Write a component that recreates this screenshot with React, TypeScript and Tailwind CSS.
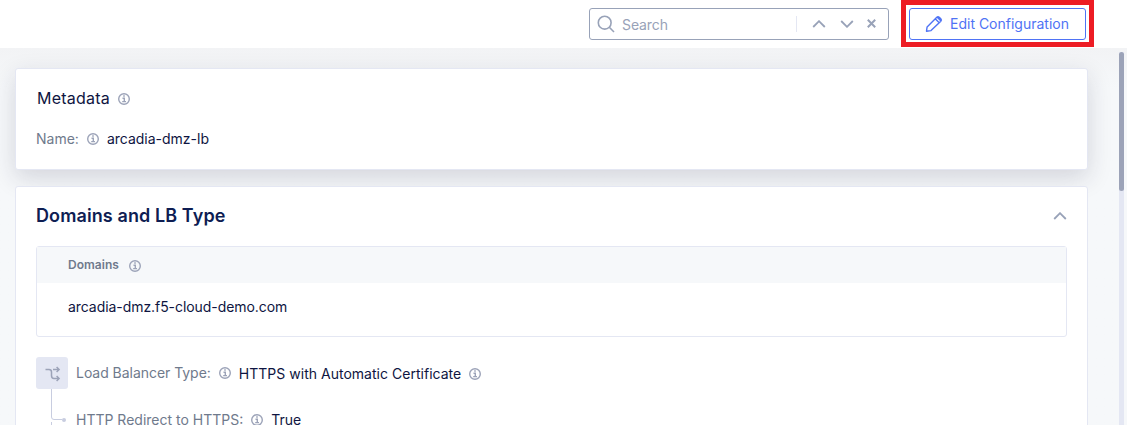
import React from "react";

function Info({ className = "" }: { className?: string }) {
  return (
    <svg viewBox="0 0 12 12" className={`h-3 w-3 shrink-0 ${className}`} fill="none" stroke="#9ca3b8">
      <circle cx="6" cy="6" r="5.3" strokeWidth="1.4" />
      <path d="M4.5 5.3H6.3V8.6M4.2 8.6H8" strokeWidth="1.4" />
      <path d="M5.2 3.1H6.8" strokeWidth="1.5" />
    </svg>
  );
}

function Chevron({ down = false }: { down?: boolean }) {
  return (
    <svg viewBox="0 0 14 8" className="h-2 w-3.5 shrink-0" fill="none" stroke="#98a2b8" strokeWidth="1.8">
      <path d={down ? "M1.2 1L7 6.8L12.8 1" : "M1.2 7L7 1.2L12.8 7"} />
    </svg>
  );
}

function Toolbar() {
  return (
    <header className="flex h-12 shrink-0 justify-end bg-white pr-[33px]">
      <div className="mt-2 mr-3 flex h-8 w-[300px] items-center rounded-[3px] border border-[#98a2b8] pl-[7px]">
        <svg viewBox="0 0 18 18" className="h-[18px] w-[18px]" fill="none" stroke="#98a2b8" strokeWidth="1.6">
          <circle cx="7.7" cy="7.7" r="6.4" />
          <path d="M12.3 12.3L17 17" />
        </svg>
        <span className="mt-0.5 ml-[7px] w-[174px] text-sm leading-5 tracking-[-0.1px] text-[#98a2b8]">Search</span>
        <span className="h-4 w-px bg-[#e4e7f3]" />
        <div className="flex items-center pl-[15px]">
          <Chevron />
          <span className="ml-3.5 flex"><Chevron down /></span>
          <svg viewBox="0 0 9 9" className="mb-px ml-[13px] h-[9px] w-[9px]" stroke="#98a2b8" strokeWidth="2">
            <path d="M.8 .8L8.2 8.2M8.2 .8L.8 8.2" />
          </svg>
        </div>
      </div>
      <div className="h-[47px] w-[193px] border-[5px] border-[#ed1c24] p-[3px]">
        <button className="flex h-8 w-[177px] items-center rounded-[3px] border border-[#4f73f5] pl-[15px] text-[#4f73f5]">
          <svg viewBox="0 0 18 18" className="mb-px h-[18px] w-[18px]" fill="none" stroke="currentColor" strokeWidth="1.4" strokeLinejoin="round">
            <path d="M1.5 16.2L2.1 11.9L11.8 2.2Q13 1 14.2 2.2L15.8 3.8Q17 5 15.8 6.2L6 15.6ZM10.2 3.8L14.2 7.8M12 2L16 6" />
          </svg>
          <span className="ml-[7px] text-sm leading-5 whitespace-nowrap">Edit Configuration</span>
        </button>
      </div>
    </header>
  );
}

function MetadataCard() {
  return (
    <section className="h-[102px] rounded-[3px] border border-[#e4e7f3] bg-white pt-[19px] pl-[21px] shadow-[0_8px_24px_rgba(30,34,60,0.16)]">
      <div className="flex h-5 items-center">
        <h2 className="text-base leading-5 tracking-[0.22px] text-[#0e1541]">Metadata</h2>
        <Info className="mt-px ml-2" />
      </div>
      <div className="mt-[21px] flex h-5 items-center text-sm">
        <span className="-ml-px text-[#6f7a8c]">Name:</span>
        <Info className="mx-2" />
        <span className="text-[#0e1541]">arcadia-dmz-lb</span>
      </div>
    </section>
  );
}

function DomainsTable() {
  return (
    <div className="mt-[18px] h-[91px] rounded-[3px] border border-[#e4e7f3]">
      <div className="flex h-9 items-center bg-[#f6f8fa] pl-[31px]">
        <span className="text-xs font-semibold tracking-[0.03px] text-[#6f7a8c]">Domains</span>
        <Info className="mt-0.5 ml-2.5" />
      </div>
      <div className="pt-3.5 pl-[31px] text-sm leading-5 tracking-[-0.06px] text-[#0e1541]">arcadia-dmz.f5-cloud-demo.com</div>
    </div>
  );
}

function LoadBalancer() {
  return (
    <div className="mt-5 flex">
      <div className="w-8 shrink-0">
        <div className="flex h-8 w-8 items-center justify-center rounded-[3px] bg-[#e4e7f3]">
          <svg viewBox="0 0 16 16" className="mt-0.5 ml-px h-4 w-4" fill="none" stroke="#9ca3b8" strokeWidth="1.5">
            <path d="M.5 3.5H4Q6.5 3.5 6.5 6V9.5Q6.5 12.5 9 12.5H14M8 3.5H14M11.6 1L14.1 3.5L11.6 6M11.6 10L14.1 12.5L11.6 15" />
          </svg>
        </div>
        <svg viewBox="0 0 32 36" className="h-9 w-8" fill="none" stroke="#c8cde0">
          <path d="M15.5 0V28Q15.5 30.5 18 30.5H26M15.5 33V36" />
          <circle cx="28" cy="31" r="2" fill="#c8cde0" stroke="none" />
        </svg>
      </div>
      <div className="text-sm text-[#0e1541]">
        <div className="mt-1.5 ml-2 flex h-5 items-center">
          <span className="tracking-[-0.04px] text-[#6f7a8c]">Load Balancer Type:</span>
          <Info className="mx-2" />
          <span className="mt-0.5 tracking-[0.02px]">HTTPS with Automatic Certificate</span>
          <Info className="mt-0.5 ml-2" />
        </div>
        <div className="mt-[27px] ml-2 flex h-5 items-center">
          <span className="text-[#6f7a8c]">HTTP Redirect to HTTPS:</span>
          <Info className="mx-2" />
          <span>True</span>
        </div>
      </div>
    </div>
  );
}

export default function App() {
  return (
    <div className="flex h-[425px] w-[1127px] flex-col overflow-hidden bg-[#f6f8fa] font-['Inter',sans-serif]">
      <Toolbar />
      <div className="flex min-h-0 flex-1 bg-linear-to-b from-[#f2f3f5] to-[#f6f8fa] to-[40px]">
        <main className="ml-[15px] w-[1073px] pt-5">
          <MetadataCard />
          <section className="mt-4 h-[300px] rounded-[3px] border border-[#e4e7f3] bg-white px-5 pt-4">
            <div className="flex h-[25px] items-center justify-between">
              <h2 className="text-lg leading-6 font-semibold tracking-[0.1px] text-[#0e1d53]">Domains and LB Type</h2>
              <Chevron />
            </div>
            <DomainsTable />
            <LoadBalancer />
          </section>
        </main>
        <div className="mt-1 ml-[31px] h-[390px] w-[5px] bg-[#e4e7f3]">
          <div className="h-[139px] rounded-full bg-[#9ca3b8]" />
        </div>
      </div>
    </div>
  );
}
